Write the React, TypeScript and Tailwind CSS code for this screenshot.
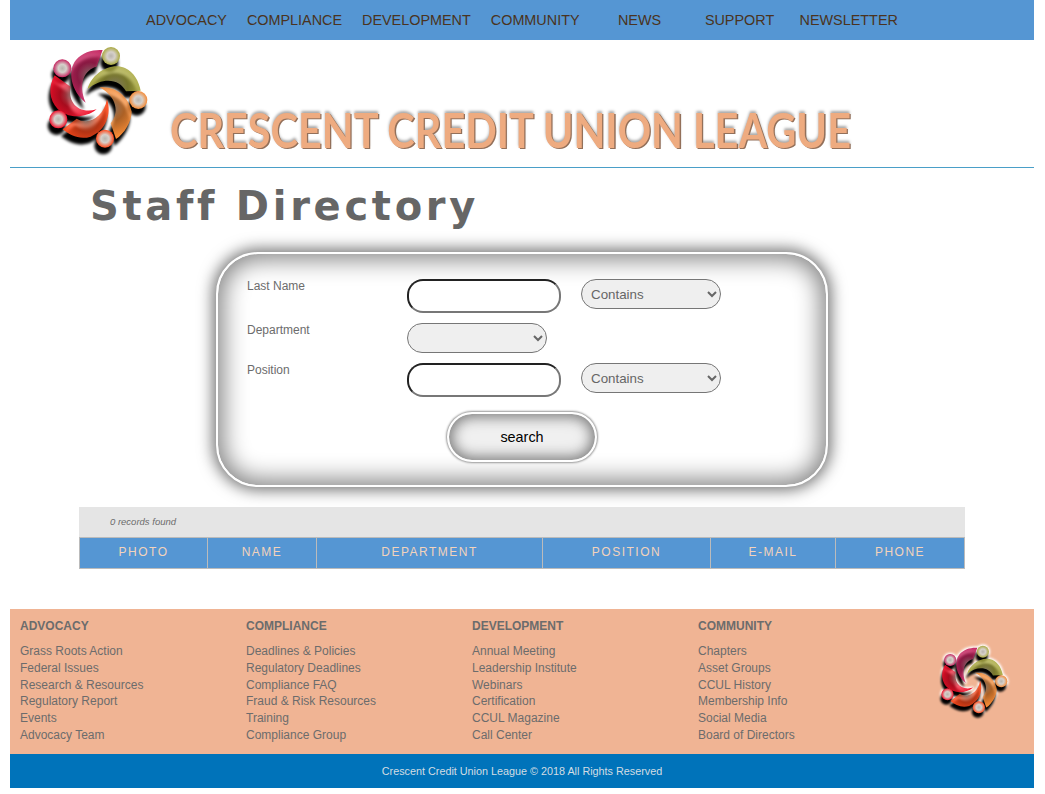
const navItems = ["ADVOCACY", "COMPLIANCE", "DEVELOPMENT", "COMMUNITY", "NEWS", "SUPPORT", "NEWSLETTER"];

const columns = [
  { title: "PHOTO", width: "w-[128px]" },
  { title: "NAME", width: "w-[109px]" },
  { title: "DEPARTMENT", width: "w-[226px]" },
  { title: "POSITION", width: "w-[168px]" },
  { title: "E-MAIL", width: "w-[125px]" },
  { title: "PHONE", width: "flex-1" },
];

const footerGroups = [
  { title: "ADVOCACY", links: ["Grass Roots Action", "Federal Issues", "Research & Resources", "Regulatory Report", "Events", "Advocacy Team"] },
  { title: "COMPLIANCE", links: ["Deadlines & Policies", "Regulatory Deadlines", "Compliance FAQ", "Fraud & Risk Resources", "Training", "Compliance Group"] },
  { title: "DEVELOPMENT", links: ["Annual Meeting", "Leadership Institute", "Webinars", "Certification", "CCUL Magazine", "Call Center"] },
  { title: "COMMUNITY", links: ["Chapters", "Asset Groups", "CCUL History", "Membership Info", "Social Media", "Board of Directors"] },
];

const logoParts = [
  { color: "#a9a83f", cx: 213, cy: 48, body: "M143 147 C155 100 212 66 255 84 C282 96 297 125 302 152 L258 154 C240 118 190 108 143 147 Z", bx: 225, by: 140 },
  { color: "#c4245f", cx: 67, cy: 85, body: "M188 30 L170 80 C136 88 112 128 137 188 C92 152 82 92 108 60 C128 36 160 28 188 30 Z", bx: 150, by: 105 },
  { color: "#f0102a", cx: 55, cy: 238, body: "M44 106 L92 140 C82 184 114 224 170 208 C130 240 78 232 53 207 C27 180 24 140 44 106 Z", bx: 98, by: 165 },
  { color: "#ff4a1c", cx: 195, cy: 296, body: "M68 268 L110 236 C142 256 190 236 201 178 C216 222 197 272 152 290 C120 300 90 287 68 268 Z", bx: 140, by: 238 },
  { color: "#f58a35", cx: 295, cy: 180, body: "M178 142 C232 136 268 175 275 215 C275 245 252 282 228 297 L212 250 C238 220 232 170 178 142 Z", bx: 215, by: 205 },
];

function Logo({ id, className, halo }: { id: string; className: string; halo?: boolean }) {
  return (
    <svg viewBox="0 0 360 375" className={className}>
      <defs>
        <filter id={`${id}-blur`} x="-20%" y="-20%" width="140%" height="140%">
          <feGaussianBlur stdDeviation="5" />
        </filter>
        {logoParts.map((p, i) => (
          <radialGradient key={i} id={`${id}-body-${i}`} gradientUnits="userSpaceOnUse" cx={p.bx} cy={p.by} r="85">
            <stop offset="0" stopColor="#7a7068" />
            <stop offset="0.45" stopColor={p.color} stopOpacity="0.7" />
            <stop offset="1" stopColor={p.color} />
          </radialGradient>
        ))}
        {logoParts.map((p, i) => (
          <radialGradient key={i} id={`${id}-head-${i}`}>
            <stop offset="0" stopColor="#b9b4ae" />
            <stop offset="0.45" stopColor="#d6d0ca" />
            <stop offset="1" stopColor={p.color} />
          </radialGradient>
        ))}
      </defs>
      {halo &&
        logoParts.map((p, i) => (
          <g key={i} filter={`url(#${id}-blur)`} fill="#fff" stroke="#fff" strokeWidth="12">
            <path d={p.body} />
            <circle cx={p.cx} cy={p.cy} r="27" />
          </g>
        ))}
      {logoParts.map((p, i) => (
        <g key={i} filter={`url(#${id}-blur)`} fill="#000" transform="translate(-5 20)">
          <path d={p.body} />
          <circle cx={p.cx} cy={p.cy} r="27" />
        </g>
      ))}
      {logoParts.map((p, i) => (
        <g key={i}>
          <path d={p.body} fill={`url(#${id}-body-${i})`} />
          <circle cx={p.cx} cy={p.cy} r="27" fill={`url(#${id}-head-${i})`} />
        </g>
      ))}
    </svg>
  );
}

function ContainsSelect() {
  return (
    <select className="ml-5 h-[30px] w-[140px] rounded-[15px] border border-[#767676] bg-[#efefef] pl-[5px] text-[13.33px] text-[#666]">
      <option>Contains</option>
    </select>
  );
}

function TextField() {
  return (
    <input
      type="text"
      className="h-[34px] w-[154px] rounded-[16px] border-2 border-t-[#222] border-r-[#777] border-b-[#777] border-l-[#222] bg-white"
    />
  );
}

export default function App() {
  return (
    <div className="ml-2.5 w-[1024px] bg-white pb-[6px] font-['Liberation_Sans',Arial,sans-serif] text-[#6c6c6c]">
      <nav className="flex h-10 items-center justify-center bg-[#5596d3] pt-px text-[14.4px] text-[#4a3320]">
        {navItems.map((item) => (
          <a key={item} className="min-w-[100px] px-2.5 text-center">
            {item}
          </a>
        ))}
      </nav>

      <header className="flex h-[128px] border-b border-[#4a9fc8] pl-[30px]">
        <Logo id="main" className="h-[125px] w-[120px]" />
        <div className="mt-[57px] ml-[10px] w-0 origin-left scale-x-[0.863] font-['Lato',sans-serif] text-[48px] leading-[66px] font-bold whitespace-nowrap text-[#eeab80] [text-shadow:1.5px_1px_0_#93705a,0_-2px_3px_#a8a8a8]">
          CRESCENT CREDIT UNION LEAGUE
        </div>
      </header>

      <h1 className="mt-[13px] pl-[80px] font-['DejaVu_Sans',sans-serif] text-[40px] leading-[50px] font-bold tracking-[3.7px] text-[#666]">
        Staff Directory
      </h1>

      <form className="mx-auto mt-[21px] w-[612px] rounded-[42px] border-2 border-white bg-white pt-[25px] pr-6 pb-[23px] pl-[29px] text-xs shadow-[0_0_15px_3px_#707070,inset_0_0_24px_5px_#808080]">
        <div className="flex">
          <label className="-mt-px w-[160px]">Last Name</label>
          <TextField />
          <ContainsSelect />
        </div>
        <div className="mt-2.5 flex">
          <label className="-mt-px w-[160px]">Department</label>
          <select className="h-[30px] w-[140px] rounded-[15px] border border-[#767676] bg-[#efefef] pl-[5px] text-[13.33px] text-[#666]">
            <option></option>
          </select>
        </div>
        <div className="mt-2.5 flex">
          <label className="-mt-px w-[160px]">Position</label>
          <TextField />
          <ContainsSelect />
        </div>
        <div className="mt-[15px] flex justify-center pr-[5px]">
          <button
            type="button"
            className="h-[50px] w-[150px] rounded-[25px] border-2 border-white bg-[#f0f0f0] pt-px text-[14.4px] text-black shadow-[0_0_2px_1px_#999,inset_0_0_14px_3px_#777]"
          >
            search
          </button>
        </div>
      </form>

      <section className="mx-auto mt-[20px] w-[886px]">
        <div className="h-[30px] bg-[#e5e5e5] pl-[31px] text-[9.5px] leading-[30px] italic">0 records found</div>
        <div className="flex h-8 border border-[#bbb] bg-[#5596d3] text-xs text-[#f3d3bb]">
          {columns.map((col, i) => (
            <div
              key={col.title}
              className={`${col.width} ${i === 5 ? "" : "border-r border-[#bbb]"} text-center leading-[28px] tracking-[1.5px]`}
            >
              {col.title}
            </div>
          ))}
        </div>
      </section>

      <footer className="mt-10 flex h-[145px] bg-[#f0b494] pt-[9px] pl-2.5 text-xs">
        {footerGroups.map((group) => (
          <div key={group.title} className="w-[226px]">
            <h3 className="text-xs leading-[17px] font-bold">{group.title}</h3>
            <ul className="mt-[8px] leading-[16.8px]">
              {group.links.map((link) => (
                <li key={link}>{link}</li>
              ))}
            </ul>
          </div>
        ))}
        <Logo id="foot" halo className="mt-[23px] ml-[11px] h-[84px] w-[81px] shrink-0" />
      </footer>
      <div className="h-[34px] bg-[#0073ba] text-center text-[10.8px] leading-[34px] text-[#d3dde3]">
        Crescent Credit Union League © 2018 All Rights Reserved
      </div>
    </div>
  );
}
